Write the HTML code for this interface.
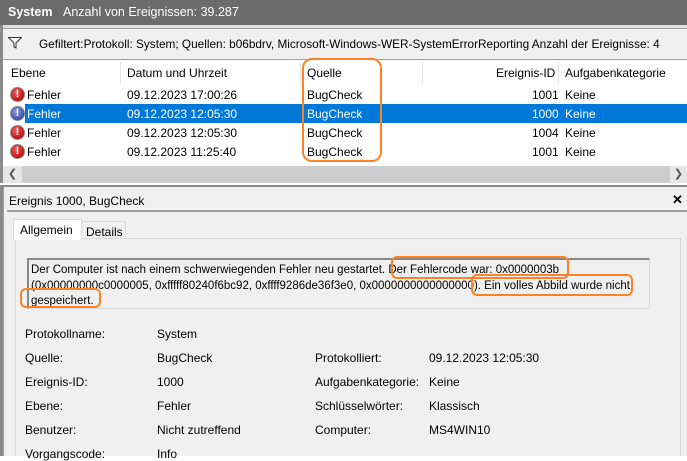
<!DOCTYPE html>
<html><head><meta charset="utf-8"><style>
*{margin:0;padding:0;box-sizing:border-box}
body{width:687px;height:456px;overflow:hidden;background:#fff;font-family:"Liberation Sans",sans-serif;font-size:12px;color:#000;position:relative}
.a{position:absolute;white-space:nowrap}
.row{position:absolute;left:3px;right:0;height:19px}
.ic{position:absolute;left:7px;top:2px;width:15px;height:15px;border-radius:50%;background:radial-gradient(circle at 40% 35%,#f06060,#c01010 70%);border:1px solid #888;color:#fff;font-weight:bold;font-size:11px;text-align:center;line-height:13px}
.ob{position:absolute;border:2.5px solid #ff8126;border-radius:6px}
</style></head><body>
<div class="a" style="left:0;top:0;width:687px;height:25px;background:#6b6b6b"></div>
<div class="a" style="left:8px;top:5px;color:#fff;font-weight:bold;font-size:12.5px">System</div>
<div class="a" style="left:63px;top:5px;color:#fff;font-size:12.5px">Anzahl von Ereignissen: 39.287</div>
<div class="a" style="left:0;top:25px;width:687px;height:3px;background:#e0e0e0"></div>
<div class="a" style="left:0;top:25px;width:3px;height:431px;background:#8a8a8a"></div>
<div class="a" style="left:3px;top:28px;width:684px;height:32px;background:#f0f0f0;border-top:1px solid #a0a0a0;border-bottom:1px solid #a0a0a0"></div>
<svg class="a" style="left:8px;top:37px" width="14" height="12" viewBox="0 0 14 12"><path d="M0.5 0.5H13.5L8 6V11L6 10V6Z" fill="#fff" stroke="#333"/></svg>
<div class="a" style="left:39px;top:37px;font-size:11.8px">Gefiltert:Protokoll: System; Quellen: b06bdrv, Microsoft-Windows-WER-SystemErrorReporting Anzahl der Ereignisse: 4</div>
<div class="a" style="left:11px;top:66px">Ebene</div>
<div class="a" style="left:120px;top:62px;width:1px;height:22px;background:#e5e5e5"></div>
<div class="a" style="left:127px;top:66px">Datum und Uhrzeit</div>
<div class="a" style="left:300px;top:62px;width:1px;height:22px;background:#e5e5e5"></div>
<div class="a" style="left:307px;top:66px">Quelle</div>
<div class="a" style="left:422px;top:62px;width:1px;height:22px;background:#e5e5e5"></div>
<div class="a" style="left:496px;top:66px">Ereignis-ID</div>
<div class="a" style="left:558px;top:62px;width:1px;height:22px;background:#e5e5e5"></div>
<div class="a" style="left:565px;top:66px">Aufgabenkategorie</div>

<div class="row" style="top:85px"><div class="ic">!</div><div class="a" style="left:24px;top:3px">Fehler</div><div class="a" style="left:124px;top:3px">09.12.2023 17:00:26</div><div class="a" style="left:304px;top:3px">BugCheck</div><div class="a" style="left:529px;top:3px">1001</div><div class="a" style="left:562px;top:3px">Keine</div></div>
<div class="row" style="top:104px;"><div class="a" style="left:22px;top:0;right:0;height:19px;background:#0078d7"></div><div class="ic" style="background:radial-gradient(circle at 40% 35%,#8fa0e0,#3a4ea8 70%)">!</div><div class="a" style="left:24px;top:3px;color:#fff">Fehler</div><div class="a" style="left:124px;top:3px;color:#fff">09.12.2023 12:05:30</div><div class="a" style="left:304px;top:3px;color:#fff">BugCheck</div><div class="a" style="left:529px;top:3px;color:#fff">1000</div><div class="a" style="left:562px;top:3px;color:#fff">Keine</div></div>
<div class="row" style="top:123px"><div class="ic">!</div><div class="a" style="left:24px;top:3px">Fehler</div><div class="a" style="left:124px;top:3px">09.12.2023 12:05:30</div><div class="a" style="left:304px;top:3px">BugCheck</div><div class="a" style="left:529px;top:3px">1004</div><div class="a" style="left:562px;top:3px">Keine</div></div>
<div class="row" style="top:142px"><div class="ic">!</div><div class="a" style="left:24px;top:3px">Fehler</div><div class="a" style="left:124px;top:3px">09.12.2023 11:25:40</div><div class="a" style="left:304px;top:3px">BugCheck</div><div class="a" style="left:529px;top:3px">1001</div><div class="a" style="left:562px;top:3px">Keine</div></div>
<div class="ob" style="left:302px;top:58px;width:80px;height:104px;border-radius:10px"></div>

<div class="a" style="left:3px;top:166px;width:684px;height:17px;background:#cdcdcd"></div>
<div class="a" style="left:3px;top:166px;width:19px;height:17px;background:#e6e6e6;font-size:11px;text-align:center;line-height:17px;color:#555">&#10094;</div>
<div class="a" style="left:670px;top:166px;width:17px;height:17px;background:#e6e6e6;font-size:11px;text-align:center;line-height:17px;color:#555">&#10095;</div>
<div class="a" style="left:0;top:183px;width:687px;height:3px;background:#fff"></div>
<div class="a" style="left:0;top:185px;width:687px;height:2px;background:#8a8a8a"></div>
<div class="a" style="left:3px;top:187px;width:684px;height:269px;background:#f0f0f0;border-left:1px solid #a0a0a0"></div>
<div class="a" style="left:9px;top:194px">Ereignis 1000, BugCheck</div>
<div class="a" style="left:672px;top:192px;font-weight:bold;font-size:13px">✕</div>
<div class="a" style="left:7px;top:210px;width:680px;height:2px;background:#a0a0a0"></div>
<div class="a" style="left:15px;top:238px;width:666px;height:218px;background:#f0f0f0;border:1px solid #dadada;border-bottom:none"></div>
<div class="a" style="left:13px;top:219px;width:69px;height:21px;background:#fff;border:1px solid #dadada;border-bottom:none"></div>
<div class="a" style="left:20px;top:223px">Allgemein</div>
<div class="a" style="left:81px;top:221px;width:45px;height:18px;background:#f0f0f0;border:1px solid #dadada"></div>
<div class="a" style="left:86px;top:225px">Details</div>
<div class="a" style="left:27px;top:258px;width:623px;height:51px;background:#f0f0f0;border:1px solid #dadada;border-top:2px solid #888;border-left:2px solid #888"></div>
<div class="a" style="left:31px;top:263px;line-height:15.5px;font-size:11.5px">Der Computer ist nach einem schwerwiegenden Fehler neu gestartet. Der Fehlercode war: 0x0000003b<br>(0x00000000c0000005, 0xfffff80240f6bc92, 0xffff9286de36f3e0, 0x0000000000000000). Ein volles Abbild wurde nicht<br>gespeichert.</div>
<div class="ob" style="left:391px;top:256px;width:178px;height:23px"></div>
<div class="ob" style="left:471px;top:274px;width:162px;height:22px"></div>
<div class="ob" style="left:20px;top:288px;width:81px;height:20px"></div>

<div class="a" style="left:25px;top:327px">Protokollname:</div><div class="a" style="left:157px;top:327px">System</div>
<div class="a" style="left:25px;top:351px">Quelle:</div><div class="a" style="left:157px;top:351px">BugCheck</div>
<div class="a" style="left:315px;top:351px">Protokolliert:</div><div class="a" style="left:429px;top:351px">09.12.2023 12:05:30</div>
<div class="a" style="left:25px;top:375px">Ereignis-ID:</div><div class="a" style="left:157px;top:375px">1000</div>
<div class="a" style="left:315px;top:375px">Aufgabenkategorie:</div><div class="a" style="left:429px;top:375px">Keine</div>
<div class="a" style="left:25px;top:399px">Ebene:</div><div class="a" style="left:157px;top:399px">Fehler</div>
<div class="a" style="left:315px;top:399px">Schlüsselwörter:</div><div class="a" style="left:429px;top:399px">Klassisch</div>
<div class="a" style="left:25px;top:423px">Benutzer:</div><div class="a" style="left:157px;top:423px">Nicht zutreffend</div>
<div class="a" style="left:315px;top:423px">Computer:</div><div class="a" style="left:429px;top:423px">MS4WIN10</div>
<div class="a" style="left:25px;top:447px">Vorgangscode:</div><div class="a" style="left:157px;top:447px">Info</div>
</body></html>
